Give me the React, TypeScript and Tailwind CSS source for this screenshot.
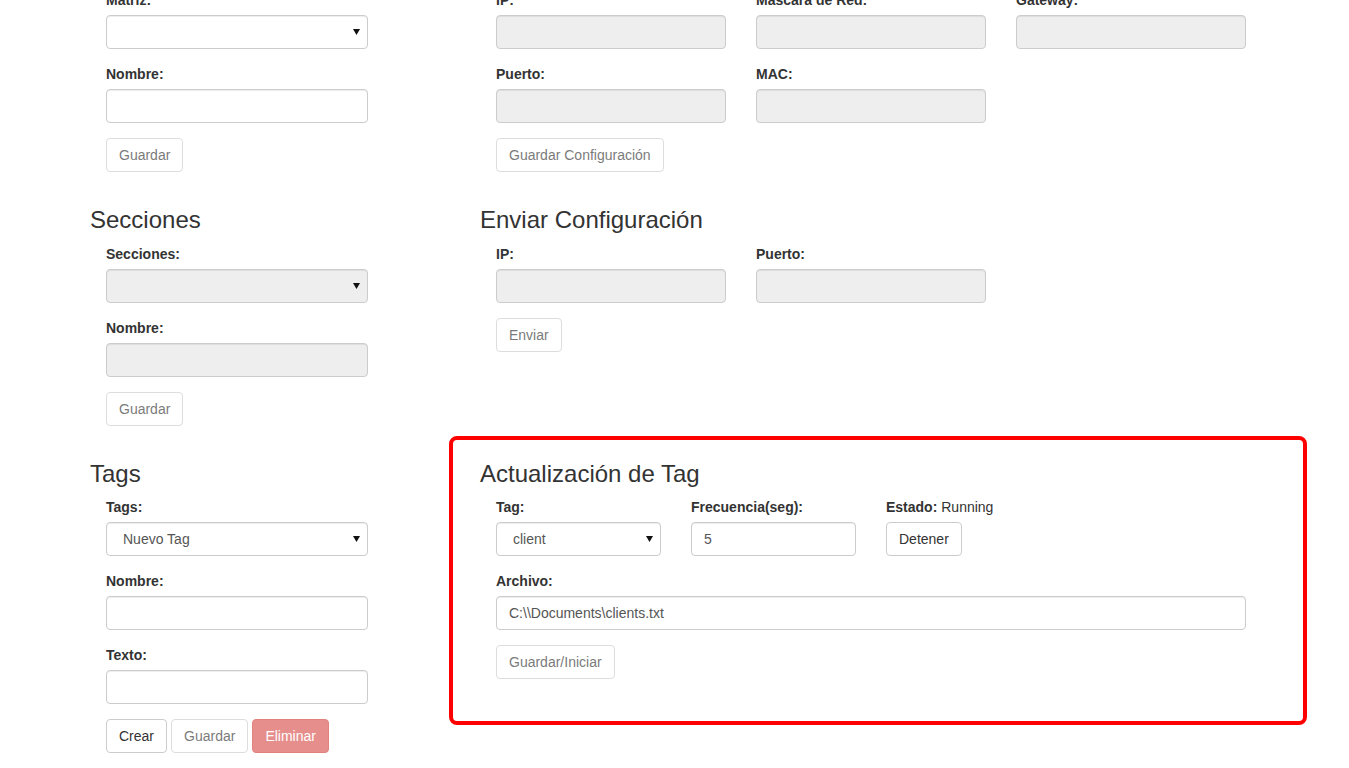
import React from 'react';

const inputBase =
  "block h-[34px] w-full rounded-[4px] border border-[#ccc] px-[12px] text-[14px] text-[#555] shadow-[inset_0_1px_1px_rgba(0,0,0,0.075)] outline-none";

function Field({ label, children }: { label: React.ReactNode; children: React.ReactNode }) {
  return (
    <div className="mb-[15px] flex flex-col">
      <label className="mb-[5px] block text-[14px] font-bold leading-[20px]">{label}</label>
      {children}
    </div>
  );
}

function TextInput({ value, disabled }: { value?: string; disabled?: boolean }) {
  return (
    <input
      className={`${inputBase} ${disabled ? 'bg-[#eee]' : 'bg-white'}`}
      defaultValue={value}
      disabled={disabled}
      readOnly
    />
  );
}

function Select({ value, disabled }: { value?: string; disabled?: boolean }) {
  return (
    <div className="relative">
      <select
        className={`${inputBase} appearance-none pl-[16px] ${disabled ? 'bg-[#eee]' : 'bg-white'}`}
        disabled={disabled}
        defaultValue={value}
      >
        {value && <option>{value}</option>}
      </select>
      <svg
        className="pointer-events-none absolute right-[8px] top-[14px]"
        width="7"
        height="6"
        viewBox="0 0 7 6"
      >
        <polygon points="0,0 7,0 3.5,6" fill="#111" />
      </svg>
    </div>
  );
}

function Btn({
  children,
  disabled,
  danger,
}: {
  children: React.ReactNode;
  disabled?: boolean;
  danger?: boolean;
}) {
  const tone = danger
    ? 'bg-[#d9534f] border-[#d43f3a] text-white'
    : 'bg-white border-[#ccc] text-[#333]';
  return (
    <button
      className={`inline-flex h-[34px] items-center whitespace-nowrap rounded-[4px] border px-[12px] text-[14px] leading-[20px] ${tone} ${
        disabled ? 'opacity-65' : ''
      }`}
    >
      {children}
    </button>
  );
}

function Heading({ children }: { children: React.ReactNode }) {
  return <h3 className="mb-[10px] mt-[20px] text-[24px] font-normal leading-[26.4px]">{children}</h3>;
}

function LeftSection({ title, children }: { title: string; children: React.ReactNode }) {
  return (
    <section className="flex w-[390px] shrink-0 flex-col">
      <Heading>{title}</Heading>
      <div className="w-[278px] pl-[16px]">{children}</div>
    </section>
  );
}

function RightSection({
  title,
  children,
  highlighted,
}: {
  title: string;
  children: React.ReactNode;
  highlighted?: boolean;
}) {
  return (
    <section className="relative flex flex-col">
      {highlighted && (
        <div className="pointer-events-none absolute left-[-31px] top-[-5px] h-[289px] w-[858px] rounded-[8px] border-[4px] border-[#f00]" />
      )}
      <Heading>{title}</Heading>
      <div className="w-[766px] pl-[16px]">{children}</div>
    </section>
  );
}

export default function App() {
  return (
    <div className="h-screen overflow-hidden bg-white font-['Liberation_Sans',Arial,sans-serif] text-[14px] text-[#333]">
      <div className="-mt-[66px] pl-[90px]">
        {/* Matriz / Configuración de red */}
        <div className="flex">
          <LeftSection title="Matriz">
            <Field label="Matriz:">
              <Select />
            </Field>
            <Field label="Nombre:">
              <TextInput />
            </Field>
            <div className="mb-[15px] flex">
              <Btn disabled>Guardar</Btn>
            </div>
          </LeftSection>
          <RightSection title="Configuración de Red">
            <div className="grid w-[750px] grid-cols-3 gap-x-[30px]">
              <Field label="IP:">
                <TextInput disabled />
              </Field>
              <Field label="Mascara de Red:">
                <TextInput disabled />
              </Field>
              <Field label="Gateway:">
                <TextInput disabled />
              </Field>
              <Field label="Puerto:">
                <TextInput disabled />
              </Field>
              <Field label="MAC:">
                <TextInput disabled />
              </Field>
            </div>
            <div className="mb-[15px] flex">
              <Btn disabled>Guardar Configuración</Btn>
            </div>
          </RightSection>
        </div>

        {/* Secciones / Enviar */}
        <div className="flex">
          <LeftSection title="Secciones">
            <Field label="Secciones:">
              <Select disabled />
            </Field>
            <Field label="Nombre:">
              <TextInput disabled />
            </Field>
            <div className="mb-[15px] flex">
              <Btn disabled>Guardar</Btn>
            </div>
          </LeftSection>
          <RightSection title="Enviar Configuración">
            <div className="grid w-[750px] grid-cols-3 gap-x-[30px]">
              <Field label="IP:">
                <TextInput disabled />
              </Field>
              <Field label="Puerto:">
                <TextInput disabled />
              </Field>
            </div>
            <div className="mb-[15px] flex">
              <Btn disabled>Enviar</Btn>
            </div>
          </RightSection>
        </div>

        {/* Tags / Actualización */}
        <div className="flex">
          <LeftSection title="Tags">
            <Field label="Tags:">
              <Select value="Nuevo Tag" />
            </Field>
            <Field label="Nombre:">
              <TextInput />
            </Field>
            <Field label="Texto:">
              <TextInput />
            </Field>
            <div className="mb-[15px] flex gap-[4px]">
              <Btn>Crear</Btn>
              <Btn disabled>Guardar</Btn>
              <Btn disabled danger>
                Eliminar
              </Btn>
            </div>
          </LeftSection>
          <RightSection title="Actualización de Tag" highlighted>
            <div className="grid w-[750px] grid-cols-4 gap-x-[30px]">
              <Field label="Tag:">
                <Select value="client" />
              </Field>
              <Field label="Frecuencia(seg):">
                <TextInput value="5" />
              </Field>
              <Field
                label={
                  <>
                    Estado: <span className="font-normal">Running</span>
                  </>
                }
              >
                <div className="flex">
                  <Btn>Detener</Btn>
                </div>
              </Field>
            </div>
            <div className="w-[750px]">
              <Field label="Archivo:">
                <TextInput value={'C:\\\\Documents\\clients.txt'} />
              </Field>
            </div>
            <div className="mb-[15px] flex">
              <Btn disabled>Guardar/Iniciar</Btn>
            </div>
          </RightSection>
        </div>
      </div>
    </div>
  );
}
